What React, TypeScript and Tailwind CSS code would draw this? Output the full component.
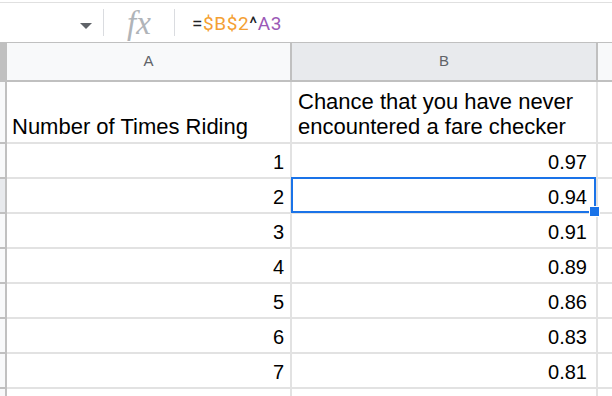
import React from "react";

const rows = [
  { n: 1, p: "0.97" },
  { n: 2, p: "0.94" },
  { n: 3, p: "0.91" },
  { n: 4, p: "0.89" },
  { n: 5, p: "0.86" },
  { n: 6, p: "0.83" },
  { n: 7, p: "0.81" },
];

const font = { fontFamily: '"Liberation Sans", Arial, sans-serif' };

export default function App() {
  return (
    <div className="relative h-[396px] w-[612px] overflow-hidden bg-white" style={font}>
      {/* formula bar */}
      <div className="mt-[2px] flex h-[40px] items-center border-t border-[#e0e0e0]">
        <div className="flex w-[103px] justify-end pr-[11px] pt-[7px]">
          <span className="h-0 w-0 border-x-[6px] border-t-[6px] border-x-transparent border-t-[#5f6368]" />
        </div>
        <div className="h-[27px] w-[1px] bg-[#dadce0]" />
        <div
          className="flex w-[70px] justify-center pt-[2px] text-[33px] italic leading-none text-[#b0b4b9]"
          style={{ fontFamily: '"Liberation Serif", serif' }}
        >
          fx
        </div>
        <div className="h-[27px] w-[1px] bg-[#dadce0]" />
        <div
          className="pl-[17px] pt-[4px] text-[19px] tracking-[0.6px] text-[#202124]"
          style={{ fontFamily: "Roboto, sans-serif" }}
        >
          =<span className="text-[#f4a033]">$B$2</span>^<span className="text-[#9b59b6]">A3</span>
        </div>
      </div>

      {/* column headers */}
      <div className="flex h-[40px] border-t border-[#c0c0c0]">
        <div className="w-[7px] bg-[#c0c0c0]" />
        <div className="flex w-[285px] items-center justify-center border-r-2 border-b-2 border-[#c0c0c0] bg-[#f8f9fa] text-[15px] text-[#5f6368]">
          A
        </div>
        <div className="flex w-[306px] items-center justify-center border-r-2 border-b-2 border-[#c0c0c0] bg-[#e8eaed] text-[15px] text-[#5f6368]">
          B
        </div>
        <div className="flex-1 border-b-2 border-[#c0c0c0] bg-[#f8f9fa]" />
      </div>

      {/* header row */}
      <div className="flex h-[62px] text-[22px] leading-[25px] text-black">
        <div className="w-[7px] border-r-2 border-b-2 border-[#c0c0c0] bg-[#f8f9fa]" />
        <div className="flex w-[285px] items-end border-r-2 border-b-2 border-[#e2e2e2] pb-[3px] pl-[5px]">
          Number of Times Riding
        </div>
        <div className="flex w-[306px] items-end border-r-2 border-b-2 border-[#e2e2e2] pb-[3px] pl-[6px]">
          Chance that you have never encountered a fare checker
        </div>
        <div className="flex-1 border-b-2 border-[#e2e2e2]" />
      </div>

      {rows.map((r) => (
        <div key={r.n} className="flex h-[35px] text-[20px] leading-[24px] text-black">
          <div
            className={
              r.n === 2
                ? "w-[7px] border-r-2 border-b-2 border-[#c0c0c0] bg-[#e8eaed]"
                : "w-[7px] border-r-2 border-b-2 border-[#c0c0c0] bg-[#f8f9fa]"
            }
          />
          <div className="flex w-[285px] items-end justify-end border-r-2 border-b-2 border-[#e2e2e2] pb-[3px] pr-[6px]">
            {r.n}
          </div>
          <div className="flex w-[306px] items-end justify-end border-r-2 border-b-2 border-[#e2e2e2] pb-[3px] pr-[9px]">
            {r.p}
          </div>
          <div className="flex-1 border-b-2 border-[#e2e2e2]" />
        </div>
      ))}
      <div className="flex h-[20px]">
        <div className="w-[7px] border-r-2 border-[#c0c0c0] bg-[#f8f9fa]" />
        <div className="w-[285px] border-r-2 border-[#e2e2e2]" />
        <div className="w-[306px] border-r-2 border-[#e2e2e2]" />
      </div>

      {/* selection */}
      <div className="pointer-events-none absolute left-[291px] top-[177px] h-[36px] w-[305px] border-2 border-[#1a73e8]" />
      <div className="absolute left-[589px] top-[206px] h-[11px] w-[11px] border border-white bg-[#1a73e8]" />
    </div>
  );
}
